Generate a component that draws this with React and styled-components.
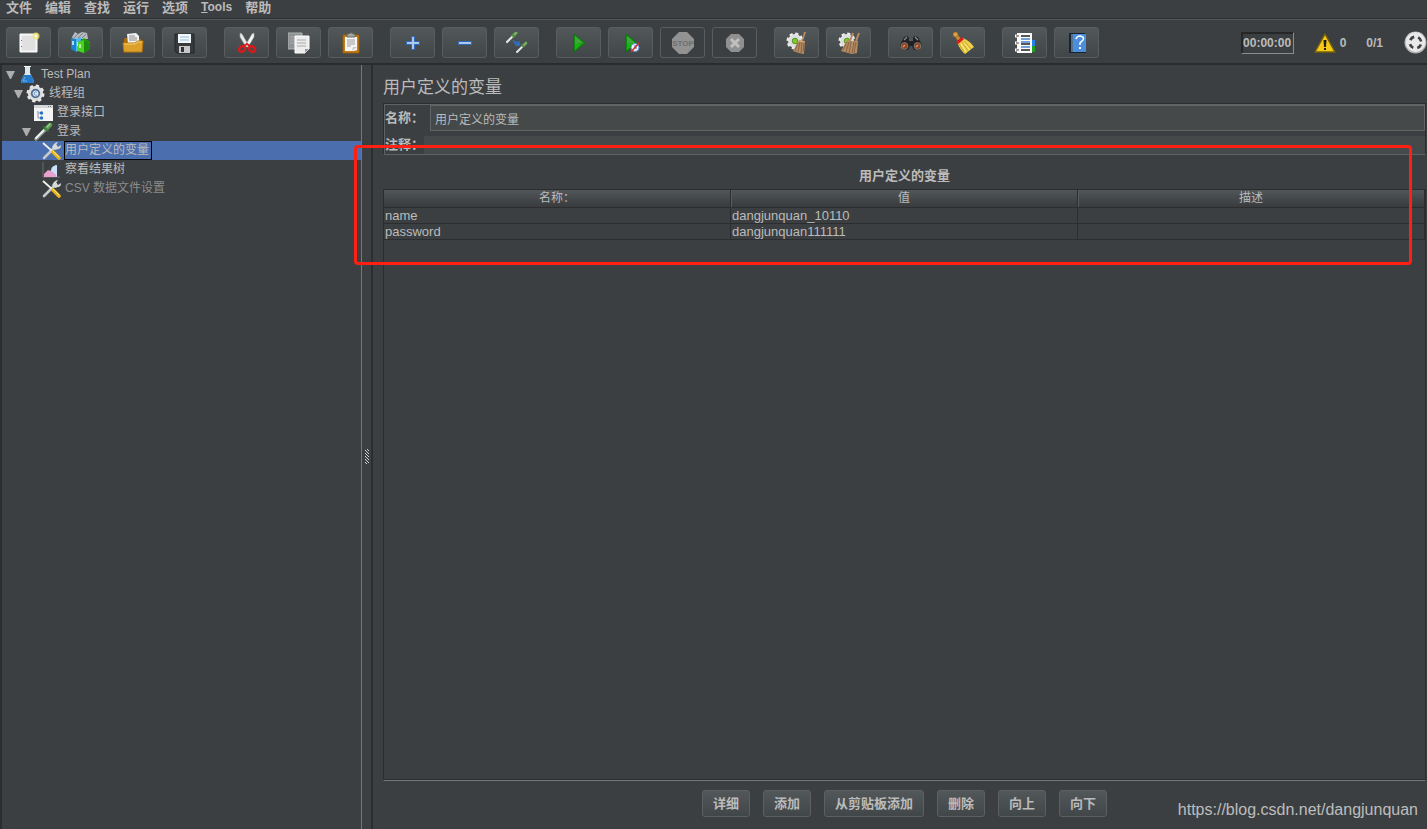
import React, { useState } from "react";
import styled, { createGlobalStyle } from "styled-components";

const GlobalStyle = createGlobalStyle`
  * {
    box-sizing: border-box;
  }
  body {
    margin: 0;
    background: #3c3f41;
    color: #bbbbbb;
    font: 12px/16px "Liberation Sans", "Noto Sans CJK SC", sans-serif;
  }
  button, input {
    font: inherit;
    color: inherit;
  }
`;

const Page = styled.div`
  position: relative;
  display: flex;
  flex-direction: column;
  min-height: 100vh;
  overflow: hidden;
`;

const MenuBar = styled.nav`
  display: flex;
  gap: 13px;
  height: 20px;
  padding: 0 6px;
  border-bottom: 1px solid #555555;
  box-shadow: inset 0 -1px 0 #2e3032;
`;

const MenuItem = styled.button`
  height: 15px;
  padding: 0;
  border: none;
  background: none;
  font-size: ${({ $latin }) => ($latin ? "12px" : "13px")};
  font-weight: bold;
  line-height: 15px;
`;

const ToolBar = styled.div`
  display: flex;
  align-items: center;
  gap: 17px;
  height: 45px;
  padding: 2px 0 0 6px;
  border-bottom: 2px solid #292b2d;
`;

const ToolGroup = styled.div`
  display: flex;
  gap: 7px;
`;

const ToolButton = styled.button`
  display: flex;
  align-items: center;
  justify-content: center;
  width: 45px;
  height: 31px;
  padding: 0;
  border: 1px solid #5a5d5e;
  border-radius: 3px;
  background: ${({ disabled }) =>
    disabled ? "transparent" : "linear-gradient(#525759, #414648)"};
`;

const Status = styled.div`
  display: flex;
  align-items: center;
  margin-left: auto;
  font-weight: bold;
`;

const Timer = styled.time`
  display: flex;
  justify-content: center;
  width: 53px;
  height: 22px;
  border: 1px solid;
  border-color: #242627 #8a8d8f #8a8d8f #242627;
  box-shadow: inset 1px 1px 0 #242627;
  line-height: 20px;
  white-space: nowrap;
`;

const Warning = styled.span`
  display: flex;
  align-items: center;
  gap: 4px;
  margin: 0 20px;
`;

const Threads = styled.span`
  margin-right: 21px;
`;

const Body = styled.div`
  display: flex;
  flex: 1;
`;

const Tree = styled.ul`
  width: 362px;
  margin: 0;
  padding: 0 0 0 2px;
  border-right: 1px solid #75787a;
  box-shadow: inset 2px 0 0 #2b2d2f;
  list-style: none;
`;

const TreeRow = styled.li`
  display: flex;
  align-items: center;
  height: 19px;
  padding-left: ${({ $level }) => $level * 8 + 4}px;
  background: ${({ $selected }) => ($selected ? "#4b6eaf" : "none")};
  color: ${({ $disabled }) => ($disabled ? "#8c8c8c" : "inherit")};

  svg {
    flex: none;
  }
`;

const Twisty = styled.span`
  display: flex;
  width: 12px;
`;

const TreeLabel = styled.span`
  margin-left: 3px;
  padding-right: 2px;
  border: 1px solid ${({ $selected }) => ($selected ? "#000000" : "transparent")};
  line-height: 17px;
  white-space: nowrap;
`;

const Splitter = styled.div`
  display: flex;
  align-items: center;
  justify-content: center;
  width: 11px;
  padding-top: 20px;
  border-right: 2px solid #2b2d2f;
`;

const Main = styled.main`
  display: flex;
  flex: 1;
  flex-direction: column;
  min-width: 0;
  padding: 13px 1px 0 10px;
`;

const Title = styled.h1`
  margin: 0 0 5px;
  font-size: 17px;
  font-weight: normal;
  line-height: 20px;
`;

const Form = styled.form`
  display: flex;
  flex-direction: column;
  gap: 5px;
  padding: 1px 0 0 1px;
  border: 1px solid #2b2d2f;
  border-bottom-color: #5f6264;
  box-shadow: inset 1px 1px 0 #5f6264;
`;

const Field = styled.div`
  display: flex;
  align-items: center;

  label {
    font-size: 13px;
    font-weight: bold;
    white-space: nowrap;
  }
`;

const TextInput = styled.input`
  flex: 1;
  min-width: 0;
  height: ${({ $framed }) => ($framed ? "26px" : "18px")};
  margin-left: ${({ $framed }) => ($framed ? "6px" : "0")};
  padding: 0 4px;
  border: ${({ $framed }) => ($framed ? "1px solid #646464" : "none")};
  background: #45494a;
  outline: none;
`;

const TableTitle = styled.h2`
  margin: 11px 0 3px;
  font-size: 13px;
  line-height: 20px;
  text-align: center;
`;

const TableFrame = styled.div`
  flex: 1;
  border: 1px solid #2b2d2f;
  border-bottom: 1px solid #75787a;
  box-shadow: inset 0 -1px 0 #2b2d2f;
`;

const Table = styled.table`
  width: 100%;
  border-collapse: separate;
  border-spacing: 0;
  table-layout: fixed;

  th {
    height: 18px;
    padding: 0;
    border-right: 1px solid #2b2d2f;
    border-bottom: 1px solid #2b2d2f;
    background: linear-gradient(#515658, #393b3d);
    font-weight: normal;
    line-height: 17px;
  }

  th + th {
    box-shadow: inset 1px 0 0 #5a5d5e;
  }

  td {
    height: 16px;
    padding: 0 1px;
    border-right: 1px solid #2b2d2f;
    border-bottom: 1px solid #2b2d2f;
    font-size: 13px;
    line-height: 15px;
  }
`;

const Actions = styled.div`
  display: flex;
  justify-content: center;
  gap: 13px;
  padding: 9px 0 12px;
`;

const ActionButton = styled.button`
  height: 27px;
  padding: 0 10px;
  border: 1px solid #5e6060;
  border-radius: 3px;
  background: linear-gradient(#525759, #414648);
  font-size: 13px;
  font-weight: bold;
  line-height: 25px;
  white-space: nowrap;
`;

const Highlight = styled.div`
  position: absolute;
  top: 145px;
  right: 15px;
  left: 354px;
  height: 120px;
  border: 3px solid #ff1f13;
  border-radius: 4px;
  pointer-events: none;
`;

const Watermark = styled.a`
  position: absolute;
  right: 9px;
  bottom: 8px;
  color: #bcbdbe;
  font-size: 16px;
  line-height: 22px;
  text-decoration: none;
`;

const Svg = ({ size = 22, box = 22, children }) => (
  <svg width={size} height={size} viewBox={`0 0 ${box} ${box}`} aria-hidden="true">
    {children}
  </svg>
);

const NewIcon = () => (
  <Svg>
    <path d="M2 2h17v18H2z" fill="#ededed" stroke="#fff" />
    <path d="M4 4h13v14H4z" fill="#e0e0e0" />
    <path d="M3 8h1v1H3zM3 14h1v1H3z" fill="#777" />
    <circle cx="18" cy="4" r="3.5" fill="#f4e46b" opacity=".8" />
    <circle cx="18" cy="4" r="1.6" fill="#fffde0" />
  </Svg>
);

const TemplatesIcon = () => (
  <Svg>
    <path d="M2 5l3-5 3 2 4-2 5 1 1 6H3z" fill="#b8bcc0" />
    <path d="M4 6l4-4M8 6l5-5M12 6l4-4" stroke="#7c8388" />
    <path d="M1 6l5 1v13l-5-3z" fill="#1585d1" />
    <path d="M6 7l5-2v12l-5 3z" fill="#4ab7f0" />
    <path d="M3 9v4M8 10v4" stroke="#e3f5ff" strokeWidth="1.5" />
    <path d="M8 11l6-5 6 4v7l-6 4-6-2z" fill="#27a310" />
    <path d="M8 10l6-2v13l-6-2z" fill="#4bd024" />
    <path d="M14 8l6 3v6l-6 4z" fill="#1c8b0c" />
    <path d="M10 12v4" stroke="#dbffc8" strokeWidth="1.5" />
  </Svg>
);

const OpenIcon = () => (
  <Svg>
    <path d="M2 7l1-1h4l1 1h11v12H2z" fill="#a96c0c" />
    <path d="M5 2l9-1 3 3v8H6z" fill="#f3f3f3" />
    <path d="M7 4h6M7 6h8M7 8h8" stroke="#888" />
    <path d="M1 11h12l3-2h5l-1 11H2z" fill="#dca02b" stroke="#b9780e" />
    <path d="M2 12h11l3-2h4" stroke="#f7cf70" fill="none" />
  </Svg>
);

const SaveIcon = () => (
  <Svg>
    <path d="M1 2h19v19H3l-2-2z" fill="#37393d" stroke="#24262a" />
    <path d="M4 2h13v9H4z" fill="#f0f7fc" />
    <path d="M6 5h9M6 8h9" stroke="#9dbbd3" />
    <path d="M5 14h11v7H5z" fill="#c7c7c7" />
    <path d="M7 15h3v5H7z" fill="#303236" />
  </Svg>
);

const CutIcon = () => (
  <Svg>
    <path d="M4 1l2 1 7 12-3 1L4 5z" fill="#e9e9e9" stroke="#a5a5a5" strokeWidth=".6" />
    <path d="M18 1l-2 1-7 12 3 1 6-10z" fill="#f5f5f5" stroke="#a5a5a5" strokeWidth=".6" />
    <ellipse cx="6" cy="17" rx="3.2" ry="2.4" transform="rotate(-35 6 17)" fill="none" stroke="#d91a1a" strokeWidth="2.4" />
    <ellipse cx="16" cy="17" rx="3.2" ry="2.4" transform="rotate(35 16 17)" fill="none" stroke="#d91a1a" strokeWidth="2.4" />
    <path d="M8 14l3-2 3 2" fill="none" stroke="#d91a1a" strokeWidth="2" />
  </Svg>
);

const CopyIcon = () => (
  <Svg>
    <path d="M0 1h14v16H0z" fill="#8f9294" stroke="#b0b2b3" />
    <path d="M2 5h10M2 8h10M2 11h6" stroke="#a9abac" />
    <path d="M7 4h14v13l-4 4H7z" fill="#ececec" stroke="#fff" />
    <path d="M9 8h9M9 11h9M9 14h9" stroke="#aaa" />
    <path d="M17 21v-4h4z" fill="#999" />
  </Svg>
);

const PasteIcon = () => (
  <Svg>
    <path d="M3 3h16v18H3z" fill="#c07d18" stroke="#965c0a" />
    <path d="M5 5h12v13l-3 1H5z" fill="#f5f5f5" />
    <path d="M7 2h2l1-1h2l1 1h2v3H7z" fill="#a6a79c" stroke="#686a60" />
    <path d="M7 8h8M7 10h8M7 12h8M7 14h4" stroke="#9c9c9c" />
    <path d="M12 19l1-4h4z" fill="#c9c9c9" />
  </Svg>
);

const PlusIcon = () => (
  <Svg>
    <path d="M9.5 4.5h3v5h5v3h-5v5h-3v-5h-5v-3h5z" fill="#a8c8ee" stroke="#3068b8" />
  </Svg>
);

const MinusIcon = () => (
  <Svg>
    <path d="M4.500 9.500h13v3h-13z" fill="#a8c8ee" stroke="#3068b8" />
  </Svg>
);

const ToggleIcon = () => (
  <Svg>
    <path d="M1 10l6-6" stroke="#e4e7e2" strokeWidth="2.2" strokeLinecap="round" />
    <path d="M7 4l3-3" stroke="#75ad5e" strokeWidth="3" strokeLinecap="round" />
    <path d="M6 2l3 3" stroke="#4f8043" strokeWidth="1.2" />
    <path d="M11 20l5-5" stroke="#e4e7e2" strokeWidth="2" strokeLinecap="round" />
    <path d="M17 14l3-3" stroke="#75ad5e" strokeWidth="2.6" strokeLinecap="round" />
    <path d="M15 12l3 3" stroke="#4f8043" strokeWidth="1.2" />
    <path d="M7 8l2 3 1-1 3 3M13 9v4H9" fill="none" stroke="#2d74d6" strokeWidth="1.3" />
  </Svg>
);

const PlayShape = () => (
  <>
    <path d="M6 2l11 9-11 9z" fill="#12990f" stroke="#0b6d0b" strokeWidth=".8" />
    <path d="M7 4l8 7-8 1z" fill="#3fa83c" />
    <path d="M7 12l6 0-6 6z" fill="#16b512" />
  </>
);

const PlayIcon = () => (
  <Svg>
    <PlayShape />
  </Svg>
);

const PlayNoPauseIcon = () => (
  <Svg>
    <PlayShape />
    <circle cx="15" cy="15.500" r="4" fill="#edf4ff" stroke="#5b8fd0" />
    <path d="M15 13v3h2" fill="none" stroke="#3975bb" />
    <path d="M11 20l8-9" stroke="#d82c2c" strokeWidth="1.6" />
  </Svg>
);

const StopIcon = () => (
  <Svg>
    <path d="M7 0h8l7 7v8l-7 7H7l-7-7V7z" fill="#929292" />
    <text x="11" y="14" textAnchor="middle" fontSize="8" fontWeight="bold" fill="#6e6e6e">
      STOP
    </text>
  </Svg>
);

const ShutdownIcon = () => (
  <Svg>
    <path d="M7 2h8l5 5v8l-5 5H7l-5-5V7z" fill="#909090" />
    <path d="M7 7l8 8M15 7l-8 8" stroke="#c1c1c1" strokeWidth="3" />
  </Svg>
);

const GearShape = () => (
  <>
    <circle cx="9" cy="9" r="7" fill="#dedede" stroke="#eeeeee" strokeWidth="3" strokeDasharray="3 2.5" />
    <circle cx="9" cy="9" r="6.5" fill="#dedede" />
    <circle cx="9" cy="9" r="2.8" fill="#82c637" stroke="#559a1c" />
  </>
);

const ClearIcon = () => (
  <Svg>
    <GearShape />
    <path d="M20 0l-3 9-1-1 2-8z" fill="#b98b5f" />
    <path d="M13 8l6 1-1 13-5-1-6-2z" fill="#b58b62" />
    <path d="M12 11l-3 8M14 10l-2 10M16 10l-1 11M18 11l-1 9" stroke="#7e5c3e" strokeWidth=".8" />
    <path d="M13 9l5 1" stroke="#d8b48c" />
  </Svg>
);

const ClearAllIcon = () => (
  <Svg>
    <GearShape />
    <path d="M15 1l-3 8M21 1l-3 8" stroke="#b98b5f" strokeWidth="2" />
    <path d="M9 8l5 1h6l-1 12-5 1-4-1-7-2z" fill="#b58b62" />
    <path d="M9 10l-4 8M11 10L8 20M13 10l-2 11M16 10l-2 11M18 10l-2 11" stroke="#7e5c3e" strokeWidth=".8" />
  </Svg>
);

const SearchIcon = () => (
  <Svg>
    <path d="M0 13l4-8 4-1 1 3h4l1-3 4 1 4 8-3 5h-5l-2-4h-2l-2 4H3z" fill="#202122" />
    <path d="M4 8l3-3M15 5l3 3M9 8h4" stroke="#8b9092" strokeWidth="1.2" />
    <circle cx="4.500" cy="14" r="3.400" fill="#8d431e" stroke="#77797a" />
    <circle cx="17.500" cy="14" r="3.400" fill="#8d431e" stroke="#77797a" />
    <path d="M3 15l2-2M16 15l2-2" stroke="#df9163" strokeWidth="1.5" />
  </Svg>
);

const BroomIcon = () => (
  <Svg>
    <path d="M5 10l6-4q7 3 11 9l-9 7q-5-4-8-12z" fill="#ecd04b" />
    <path d="M7 12l5 8M10 10l6 9M12 9l7 8" stroke="#c8a724" />
    <path d="M9 12l5 8M12 11l6 7" stroke="#fff08c" />
    <path d="M4 3l4 6" stroke="#c98a30" strokeWidth="3.400" />
    <circle cx="3.500" cy="2.500" r="2.500" fill="#d9a04a" stroke="#9c6018" strokeWidth=".7" />
    <path d="M5 11l6-5" fill="none" stroke="#d71e20" strokeWidth="3" />
  </Svg>
);

const FunctionsIcon = () => (
  <Svg>
    <path d="M16 8h5v6h-5z" fill="#2680ec" />
    <path d="M16 14h5v6h-5z" fill="#239b21" />
    <path d="M3 1h15v20H3z" fill="#fbfbfb" />
    <path d="M7 4h9M7 12h9M7 18h9" stroke="#222" strokeWidth="1.3" />
    <path d="M7 7h9M7 10h9M7 15h9" stroke="#4185cf" strokeWidth="1.3" />
    <path d="M1 4h4M1 11h4M1 18h4" stroke="#fff" strokeWidth="3" />
    <path d="M2 4h3M2 11h3M2 18h3" stroke="#444" />
  </Svg>
);

const HelpIcon = () => (
  <Svg>
    <path d="M3 1h16l1 1v19H3z" fill="#182331" />
    <path d="M7 2h13v18H7z" fill="#4c8edb" />
    <path d="M6 2v18" stroke="#8cc1ee" />
    <path d="M10 7q1-3 4-3 5 1 3 4l-3 3v2" fill="none" stroke="#fff" strokeWidth="1.5" />
    <path d="M13 15h2v2h-2z" fill="#fff" />
  </Svg>
);

const WarningIcon = () => (
  <Svg>
    <path d="M11 2l10 18H1z" fill="#f7c917" stroke="#76610b" strokeWidth="1.5" strokeLinejoin="round" />
    <path d="M9.500 8h3l-.5 7h-2z" fill="#202020" />
    <path d="M10 16h2v2h-2z" fill="#202020" />
  </Svg>
);

const ThreadsIcon = () => (
  <Svg size={23}>
    <circle cx="11" cy="11" r="10.500" fill="#b4b4b4" />
    <circle cx="11" cy="10.500" r="9.500" fill="#e9e9e9" />
    <circle cx="11" cy="11" r="5.500" fill="none" stroke="#3f4244" strokeWidth="2.600" strokeDasharray="4.640 4" strokeDashoffset="-2" />
  </Svg>
);

const PlanIcon = () => (
  <Svg size={19} box={19}>
    <path d="M7 2h5v6l4 8q0 2-2 2H5q-2 0-2-2l4-8z" fill="#dbe6ee" />
    <path d="M6 10h7l3 6q0 2-2 2H5q-2 0-2-2z" fill="#2379ca" />
    <path d="M7 12l-2 4h4" fill="none" stroke="#6cb5eb" />
    <path d="M6 1h7v1H6z" fill="#f6f6f6" />
  </Svg>
);

const GroupIcon = () => (
  <Svg size={19} box={19}>
    <circle cx="9.500" cy="9.500" r="7.600" fill="#ddd" stroke="#e8e8e8" strokeWidth="2.800" strokeDasharray="3.200 2.770" />
    <circle cx="9.500" cy="9.500" r="7" fill="#dedede" />
    <circle cx="9.500" cy="9.500" r="3.800" fill="#dfe9f3" stroke="#4d6c96" strokeWidth="1.800" />
    <path d="M11 8q-3-1-3 2 1 2 3 1" fill="none" stroke="#7f9cc0" />
  </Svg>
);

const RequestIcon = () => (
  <Svg size={19} box={19}>
    <path d="M0 2h19v16H0z" fill="#f4f4f4" />
    <path d="M0 2h19v3H0z" fill="#d4d6d7" />
    <path d="M14 3h1v1h-1zM16 3h1v1h-1z" fill="#777" />
    <path d="M4 8v7h3M4 10h3" fill="none" stroke="#8093aa" />
    <circle cx="7.500" cy="10" r="1.700" fill="#266fc1" />
    <circle cx="7.500" cy="15" r="1.700" fill="#266fc1" />
  </Svg>
);

const SamplerIcon = () => (
  <Svg size={19} box={19}>
    <path d="M2 17L11 8" stroke="#8e9893" strokeWidth="3.400" strokeLinecap="round" />
    <path d="M2 16l8-8" stroke="#f3f5f2" strokeWidth="1.800" strokeLinecap="round" />
    <path d="M12 7l4-4" stroke="#5c9e50" strokeWidth="4.400" strokeLinecap="round" />
    <path d="M10 5l4 4" stroke="#3f7a38" strokeWidth="1.600" strokeLinecap="round" />
    <path d="M13 5l3-3" stroke="#9cd18b" strokeWidth="1.200" strokeLinecap="round" />
  </Svg>
);

const ConfigIcon = () => (
  <Svg size={19} box={19}>
    <path d="M2 17L14 5" stroke="#c6cac8" strokeWidth="2.600" strokeLinecap="round" />
    <path d="M12 3q2-2 4-2l-2 3 2 2 3-2q0 4-3 4l-3 1-3-3z" fill="#d5d9d7" />
    <path d="M1 2l9 8" stroke="#eef0ed" strokeWidth="1.800" />
    <path d="M11 11l6 6" stroke="#e9b620" strokeWidth="3.600" strokeLinecap="round" />
    <path d="M11 10l6 6" stroke="#ffe785" />
  </Svg>
);

const ResultsIcon = () => (
  <Svg size={19} box={19}>
    <path d="M1 2v15h17" stroke="#696c6e" fill="none" />
    <path d="M8 12l2-5 4-2 1 12H8z" fill="#8db7eb" />
    <path d="M9 12q0-6 6-7v12l-4-3z" fill="#c8e1f9" />
    <path d="M2 17v-3l4-4 5 2 3 3v2z" fill="#e9a0ce" />
  </Svg>
);

const ArrowIcon = () => (
  <svg width="9" height="8" viewBox="0 0 9 8" aria-hidden="true">
    <path d="M0 0h9L5 8H4z" fill="#adadad" />
  </svg>
);

const GripIcon = () => (
  <svg width="4" height="16" viewBox="0 0 4 16" aria-hidden="true">
    {[0, 3, 6, 9, 12].map((y) => (
      <path key={y} d={`M2 ${y}h1v1H2zM3 ${y + 1}h1v1H3zM0 ${y + 1}h1v1H0zM1 ${y + 2}h1v1H1z`} fill="#d4d4d4" />
    ))}
  </svg>
);

const menus = ["文件", "编辑", "查找", "运行", "选项", "Tools", "帮助"];

const toolGroups = [
  [
    { label: "新建", icon: NewIcon },
    { label: "模板", icon: TemplatesIcon },
    { label: "打开", icon: OpenIcon },
    { label: "保存", icon: SaveIcon },
  ],
  [
    { label: "剪切", icon: CutIcon },
    { label: "复制", icon: CopyIcon },
    { label: "粘贴", icon: PasteIcon },
  ],
  [
    { label: "展开", icon: PlusIcon },
    { label: "收起", icon: MinusIcon },
    { label: "切换", icon: ToggleIcon },
  ],
  [
    { label: "启动", icon: PlayIcon },
    { label: "不停顿启动", icon: PlayNoPauseIcon },
    { label: "停止", icon: StopIcon, disabled: true },
    { label: "关闭", icon: ShutdownIcon, disabled: true },
  ],
  [
    { label: "清除", icon: ClearIcon },
    { label: "清除全部", icon: ClearAllIcon },
  ],
  [
    { label: "搜索", icon: SearchIcon },
    { label: "重置搜索", icon: BroomIcon },
  ],
  [
    { label: "函数助手", icon: FunctionsIcon },
    { label: "帮助", icon: HelpIcon },
  ],
];

const nodes = [
  { label: "Test Plan", level: 0, icon: PlanIcon, open: true },
  { label: "线程组", level: 1, icon: GroupIcon, open: true },
  { label: "登录接口", level: 2, icon: RequestIcon },
  { label: "登录", level: 2, icon: SamplerIcon, open: true },
  { label: "用户定义的变量", level: 3, icon: ConfigIcon, selected: true },
  { label: "察看结果树", level: 3, icon: ResultsIcon },
  { label: "CSV 数据文件设置", level: 3, icon: ConfigIcon, disabled: true },
];

const variables = [
  { name: "name", value: "dangjunquan_10110" },
  { name: "password", value: "dangjunquan111111" },
];

const actions = ["详细", "添加", "从剪贴板添加", "删除", "向上", "向下"];

const App = () => {
  const [name, setName] = useState("用户定义的变量");
  const [comment, setComment] = useState("");

  return (
    <Page>
      <GlobalStyle />
      <MenuBar>
        {menus.map((menu) => (
          <MenuItem key={menu} type="button" $latin={menu === "Tools"}>
            {menu === "Tools" ? <><u>T</u>ools</> : menu}
          </MenuItem>
        ))}
      </MenuBar>

      <ToolBar>
        {toolGroups.map((group) => (
          <ToolGroup key={group[0].label}>
            {group.map(({ label, icon: Icon, disabled }) => (
              <ToolButton key={label} type="button" aria-label={label} disabled={disabled}>
                <Icon />
              </ToolButton>
            ))}
          </ToolGroup>
        ))}
        <Status>
          <Timer>00:00:00</Timer>
          <Warning>
            <WarningIcon />0
          </Warning>
          <Threads>0/1</Threads>
          <ThreadsIcon />
        </Status>
      </ToolBar>

      <Body>
        <Tree>
          {nodes.map(({ label, level, icon: Icon, open, selected, disabled }) => (
            <TreeRow key={label} $level={level} $selected={selected} $disabled={disabled}>
              <Twisty>{open && <ArrowIcon />}</Twisty>
              <Icon />
              <TreeLabel $selected={selected}>{label}</TreeLabel>
            </TreeRow>
          ))}
        </Tree>
        <Splitter>
          <GripIcon />
        </Splitter>

        <Main>
          <Title>用户定义的变量</Title>
          <Form>
            <Field>
              <label htmlFor="name">名称：</label>
              <TextInput
                id="name"
                $framed
                value={name}
                onChange={(e) => setName(e.target.value)}
              />
            </Field>
            <Field>
              <label htmlFor="comment">注释：</label>
              <TextInput
                id="comment"
                value={comment}
                onChange={(e) => setComment(e.target.value)}
              />
            </Field>
          </Form>

          <TableTitle>用户定义的变量</TableTitle>
          <TableFrame>
            <Table>
              <thead>
                <tr>
                  <th>名称：</th>
                  <th>值</th>
                  <th>描述</th>
                </tr>
              </thead>
              <tbody>
                {variables.map((row) => (
                  <tr key={row.name}>
                    <td>{row.name}</td>
                    <td>{row.value}</td>
                    <td />
                  </tr>
                ))}
              </tbody>
            </Table>
          </TableFrame>

          <Actions>
            {actions.map((action) => (
              <ActionButton key={action} type="button">
                {action}
              </ActionButton>
            ))}
          </Actions>
        </Main>
      </Body>

      <Highlight />
      <Watermark href="https://blog.csdn.net/dangjunquan">
        https://blog.csdn.net/dangjunquan
      </Watermark>
    </Page>
  );
};

export default App;
